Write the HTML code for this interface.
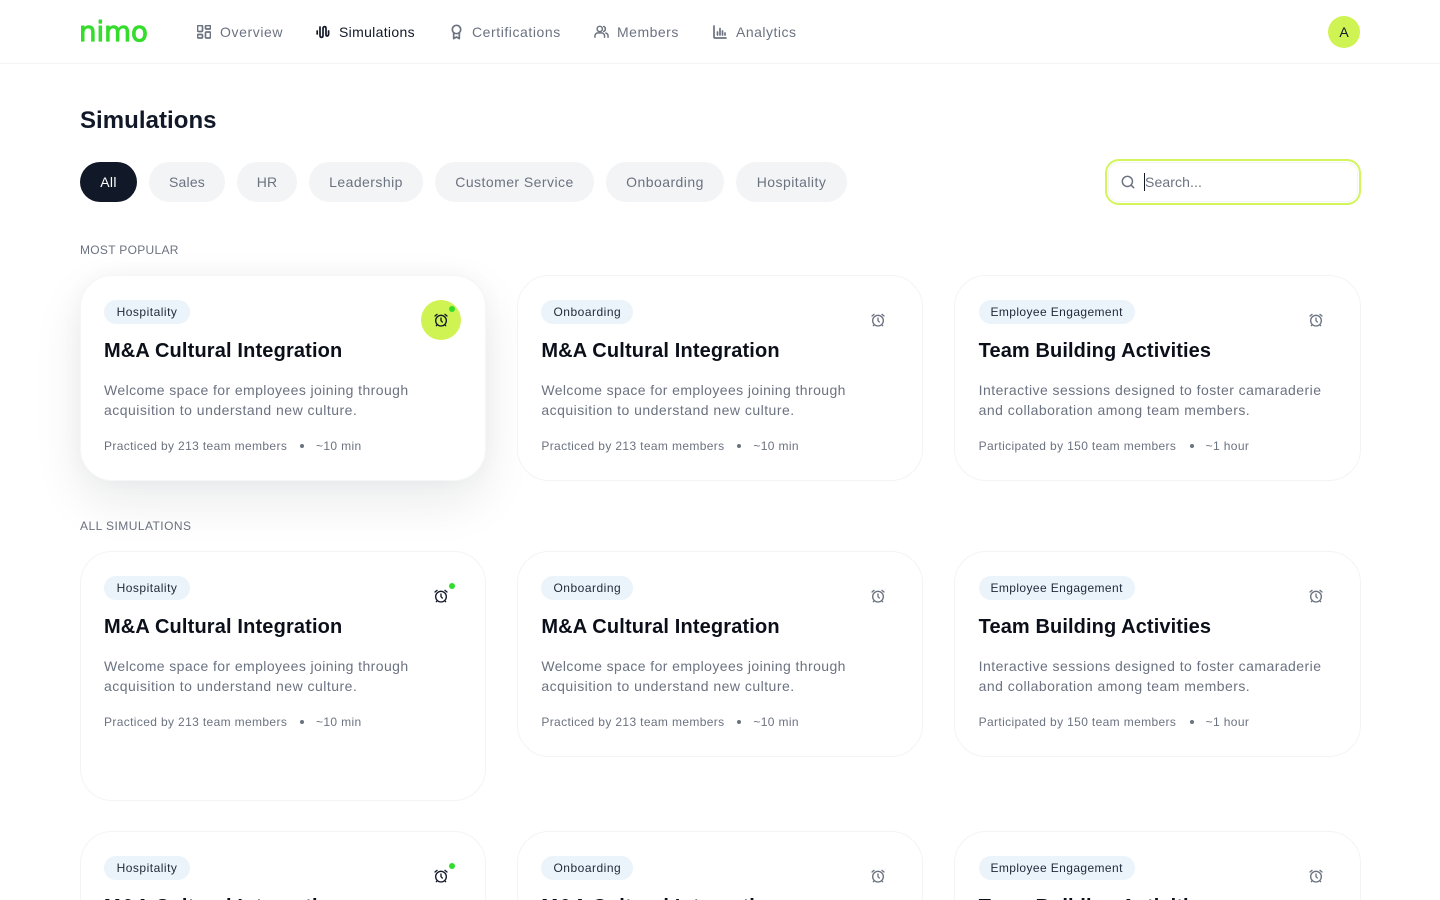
<!DOCTYPE html>
<html lang="en"><head><meta charset="utf-8"><title>Simulations</title>
<style>
*{box-sizing:border-box;margin:0;padding:0}
html,body{width:1440px;height:900px;overflow:hidden;background:#fff}
body{font-family:"Liberation Sans",sans-serif;position:relative;color:#6b7280}
.a,.card,.t,.chip{position:absolute}
header{position:absolute;left:0;top:0;width:1440px;height:64px;border-bottom:1px solid #f3f4f6}
.nav{position:absolute;top:22px;height:20px;line-height:20px;font-size:14px;letter-spacing:.5px;white-space:nowrap;color:#6b7280}
.nav.on{color:#111827}
.ic{position:absolute;fill:none;stroke:currentColor;stroke-width:1.7;stroke-linecap:round;stroke-linejoin:round}
h1{position:absolute;left:80px;top:106px;font-size:24px;line-height:30px;font-weight:700;color:#111827;letter-spacing:.05px}
.chip{top:162px;height:40px;border-radius:20px;background:#f3f4f6;line-height:40px;text-align:center;font-size:14px;letter-spacing:.45px;color:#6b7280}
.chip.on{background:#111827;color:#fff}
.sec{position:absolute;left:80px;font-size:12px;line-height:16px;color:#6b7280}
.card{width:406px;height:206px;border:1px solid #f3f4f6;border-radius:32px;background:#fff}
.c2{left:517px;width:406px}
.c2>*{margin-left:.33px}
.c3{left:954px;width:407px}
.c3>*{margin-left:.67px}
.tag{position:absolute;left:23px;top:24px;height:24px;line-height:24px;border-radius:12px;background:#ebf3fb;color:#1f2937;font-size:12px;letter-spacing:.5px;text-align:center;white-space:nowrap}
.c3 .tag{letter-spacing:.4px}
.ttl{position:absolute;left:23px;top:60px;line-height:30px;font-size:20px;font-weight:700;color:#0b0f19;white-space:nowrap;letter-spacing:.15px}
.c3 .ttl{letter-spacing:.1px}
.d{position:absolute;left:23px;top:104px;font-size:14px;line-height:20px;color:#6b7280;white-space:nowrap;letter-spacing:.41px}
.d b{font-weight:400;letter-spacing:.48px}
.c3 .d{letter-spacing:.45px}
.c3 .d b{letter-spacing:.46px}
.m{position:absolute;left:23px;top:161px;font-size:12px;line-height:18px;color:#6b7280;white-space:nowrap;letter-spacing:.36px}
.m i{position:absolute;top:7px;width:4px;height:4px;border-radius:50%;background:#6b7280}
.m span{position:absolute;top:0}
.clk{position:absolute;left:352px;top:36px;width:16px;height:16px;fill:none;stroke:#6b7280;stroke-width:2;stroke-linecap:round;stroke-linejoin:round}
.clk.dk{stroke:#111827}
.dot{position:absolute;left:367.5px;top:30px;width:6px;height:6px;border-radius:50%;background:#32dc2c}
.dot.lo{top:31px}
.hl{position:absolute;left:340px;top:24px;width:40px;height:40px;border-radius:50%;background:#cff352}
.hov{box-shadow:0 20px 50px rgba(17,24,39,.085),0 0 24px rgba(17,24,39,.03);border-color:#f6f6f7}
</style></head><body>

<header>
<svg class="a" style="left:78px;top:14px" width="74" height="34" viewBox="0 0 74 34"><text x="1" y="27" font-family="DejaVu Sans, sans-serif" font-size="27.6" fill="#35dc2c" stroke="#35dc2c" stroke-width="1" stroke-linejoin="round">nimo</text></svg>

<svg class="ic" style="left:197px;top:25px;color:#6b7280" width="14" height="14" viewBox="1 1 14 14" stroke-width="1.4"><rect x="1.5" y="1.5" width="5" height="6" rx="1"/><rect x="9.5" y="1.5" width="5" height="3.5" rx="1"/><rect x="1.5" y="10.5" width="5" height="3.5" rx="1"/><rect x="9.5" y="8" width="5" height="6" rx="1"/></svg>
<div class="nav" style="left:220px;letter-spacing:.6px">Overview</div>

<svg class="ic" style="left:316px;top:25px;color:#111827" width="14" height="14" viewBox="0 0 14 14" stroke-width="1.4"><path d="M1.2 6v3M4 2v8.5c0 2.5 3 2.5 3 0V3.5c0-2.5 3-2.5 3 0V10c0 1.5 2.6 1.5 2.6-1V6"/></svg>
<div class="nav on" style="left:339px;letter-spacing:.32px">Simulations</div>

<svg class="ic" style="left:449px;top:24px;color:#6b7280" width="15" height="16" viewBox="0 0 15 16" stroke-width="1.5"><circle cx="7.5" cy="5.5" r="4.2"/><path d="M4.7 9v5.6l2.8-1.6 2.8 1.6V9"/></svg>
<div class="nav" style="left:472px;letter-spacing:.56px">Certifications</div>

<svg class="ic" style="left:594px;top:25px;color:#6b7280" width="15" height="14" viewBox="0 0 17 16" stroke-width="1.5"><circle cx="6.5" cy="4.5" r="3"/><path d="M1 14v-1.5A3.5 3.5 0 0 1 4.5 9h4a3.5 3.5 0 0 1 3.5 3.5V14M11 1.7a3 3 0 0 1 0 5.6M16 14v-1.5a3.5 3.5 0 0 0-2.5-3.3"/></svg>
<div class="nav" style="left:617px">Members</div>

<svg class="ic" style="left:713px;top:25px;color:#6b7280" width="14" height="14" viewBox="1 1 14 14" stroke-width="1.2"><path d="M2 2v11a1 1 0 0 0 1 1h11M5.5 11V8M8 11V4.5M10.5 11V7M13 11V9"/></svg>
<div class="nav" style="left:736px">Analytics</div>

<div class="a" style="left:1328px;top:16px;width:32px;height:32px;border-radius:50%;background:#cff352;color:#111827;font-size:14px;line-height:32px;text-align:center">A</div>
</header>

<h1>Simulations</h1>

<div class="chip on" style="left:80px;width:57px;letter-spacing:.3px">All</div>
<div class="chip" style="left:149px;width:76px;letter-spacing:.2px">Sales</div>
<div class="chip" style="left:237px;width:60px;letter-spacing:.2px">HR</div>
<div class="chip" style="left:309px;width:114px">Leadership</div>
<div class="chip" style="left:435px;width:159px">Customer Service</div>
<div class="chip" style="left:606px;width:118px">Onboarding</div>
<div class="chip" style="left:736px;width:111px">Hospitality</div>

<div class="a" style="left:1105px;top:159px;width:256px;height:46px;border:2px solid #d3f45a;border-radius:14px;background:#fff">
 <div class="a" style="left:1px;top:1px;right:1px;bottom:1px;border:1px solid #f3f4f6;border-radius:11px"></div>
 <svg class="ic" style="left:14px;top:14px;color:#6b7280" width="14" height="14" viewBox="0 0 16 16" stroke-width="1.6"><circle cx="7.3" cy="7.3" r="5.8"/><path d="M14.5 14.5l-3-3"/></svg>
 <div class="a" style="left:37px;top:12px;width:1px;height:18px;background:#111827"></div>
 <div class="a" style="left:38px;top:11px;font-size:14px;line-height:20px;letter-spacing:.1px;color:#6b7280">Search...</div>
</div>

<div class="sec" style="top:242px;letter-spacing:.3px">MOST POPULAR</div>
<div class="sec" style="top:518px;letter-spacing:.45px">ALL SIMULATIONS</div>

<!-- Row 1 -->
<div class="card hov" style="left:80px;top:275px">
 <div class="tag" style="width:86px">Hospitality</div>
 <div class="hl"></div>
 <svg class="clk dk" viewBox="0 0 24 24"><circle cx="12" cy="13" r="8"/><path d="M12 9v4l2 2M6 3.5 3 6M21 6l-3-2.5M6.4 19 5 20.5M17.6 19 19 20.5"/></svg>
 <div class="dot"></div>
 <div class="ttl">M&amp;A Cultural Integration</div>
 <div class="d">Welcome space for employees joining through<br><b>acquisition to understand new culture.</b></div>
 <div class="m">Practiced by 213 team members<i style="left:196px"></i><span style="left:212px">~10 min</span></div>
</div>
<div class="card c2" style="top:275px">
 <div class="tag" style="width:92px">Onboarding</div>
 <svg class="clk" viewBox="0 0 24 24"><circle cx="12" cy="13" r="8"/><path d="M12 9v4l2 2M6 3.5 3 6M21 6l-3-2.5M6.4 19 5 20.5M17.6 19 19 20.5"/></svg>
 <div class="ttl">M&amp;A Cultural Integration</div>
 <div class="d">Welcome space for employees joining through<br><b>acquisition to understand new culture.</b></div>
 <div class="m">Practiced by 213 team members<i style="left:196px"></i><span style="left:212px">~10 min</span></div>
</div>
<div class="card c3" style="top:275px">
 <div class="tag" style="width:156px">Employee Engagement</div>
 <svg class="clk" viewBox="0 0 24 24"><circle cx="12" cy="13" r="8"/><path d="M12 9v4l2 2M6 3.5 3 6M21 6l-3-2.5M6.4 19 5 20.5M17.6 19 19 20.5"/></svg>
 <div class="ttl">Team Building Activities</div>
 <div class="d">Interactive sessions designed to foster camaraderie<br><b>and collaboration among team members.</b></div>
 <div class="m">Participated by 150 team members<i style="left:211px"></i><span style="left:227px">~1 hour</span></div>
</div>

<!-- Row 2 -->
<div class="card" style="left:80px;top:551px;height:250px">
 <div class="tag" style="width:86px">Hospitality</div>
 <svg class="clk dk" viewBox="0 0 24 24"><circle cx="12" cy="13" r="8"/><path d="M12 9v4l2 2M6 3.5 3 6M21 6l-3-2.5M6.4 19 5 20.5M17.6 19 19 20.5"/></svg>
 <div class="dot lo"></div>
 <div class="ttl">M&amp;A Cultural Integration</div>
 <div class="d">Welcome space for employees joining through<br><b>acquisition to understand new culture.</b></div>
 <div class="m">Practiced by 213 team members<i style="left:196px"></i><span style="left:212px">~10 min</span></div>
</div>
<div class="card c2" style="top:551px">
 <div class="tag" style="width:92px">Onboarding</div>
 <svg class="clk" viewBox="0 0 24 24"><circle cx="12" cy="13" r="8"/><path d="M12 9v4l2 2M6 3.5 3 6M21 6l-3-2.5M6.4 19 5 20.5M17.6 19 19 20.5"/></svg>
 <div class="ttl">M&amp;A Cultural Integration</div>
 <div class="d">Welcome space for employees joining through<br><b>acquisition to understand new culture.</b></div>
 <div class="m">Practiced by 213 team members<i style="left:196px"></i><span style="left:212px">~10 min</span></div>
</div>
<div class="card c3" style="top:551px">
 <div class="tag" style="width:156px">Employee Engagement</div>
 <svg class="clk" viewBox="0 0 24 24"><circle cx="12" cy="13" r="8"/><path d="M12 9v4l2 2M6 3.5 3 6M21 6l-3-2.5M6.4 19 5 20.5M17.6 19 19 20.5"/></svg>
 <div class="ttl">Team Building Activities</div>
 <div class="d">Interactive sessions designed to foster camaraderie<br><b>and collaboration among team members.</b></div>
 <div class="m">Participated by 150 team members<i style="left:211px"></i><span style="left:227px">~1 hour</span></div>
</div>

<!-- Row 3 -->
<div class="card" style="left:80px;top:831px">
 <div class="tag" style="width:86px">Hospitality</div>
 <svg class="clk dk" viewBox="0 0 24 24"><circle cx="12" cy="13" r="8"/><path d="M12 9v4l2 2M6 3.5 3 6M21 6l-3-2.5M6.4 19 5 20.5M17.6 19 19 20.5"/></svg>
 <div class="dot lo"></div>
 <div class="ttl">M&amp;A Cultural Integration</div>
</div>
<div class="card c2" style="top:831px">
 <div class="tag" style="width:92px">Onboarding</div>
 <svg class="clk" viewBox="0 0 24 24"><circle cx="12" cy="13" r="8"/><path d="M12 9v4l2 2M6 3.5 3 6M21 6l-3-2.5M6.4 19 5 20.5M17.6 19 19 20.5"/></svg>
 <div class="ttl">M&amp;A Cultural Integration</div>
</div>
<div class="card c3" style="top:831px">
 <div class="tag" style="width:156px">Employee Engagement</div>
 <svg class="clk" viewBox="0 0 24 24"><circle cx="12" cy="13" r="8"/><path d="M12 9v4l2 2M6 3.5 3 6M21 6l-3-2.5M6.4 19 5 20.5M17.6 19 19 20.5"/></svg>
 <div class="ttl">Team Building Activities</div>
</div>

</body></html>
